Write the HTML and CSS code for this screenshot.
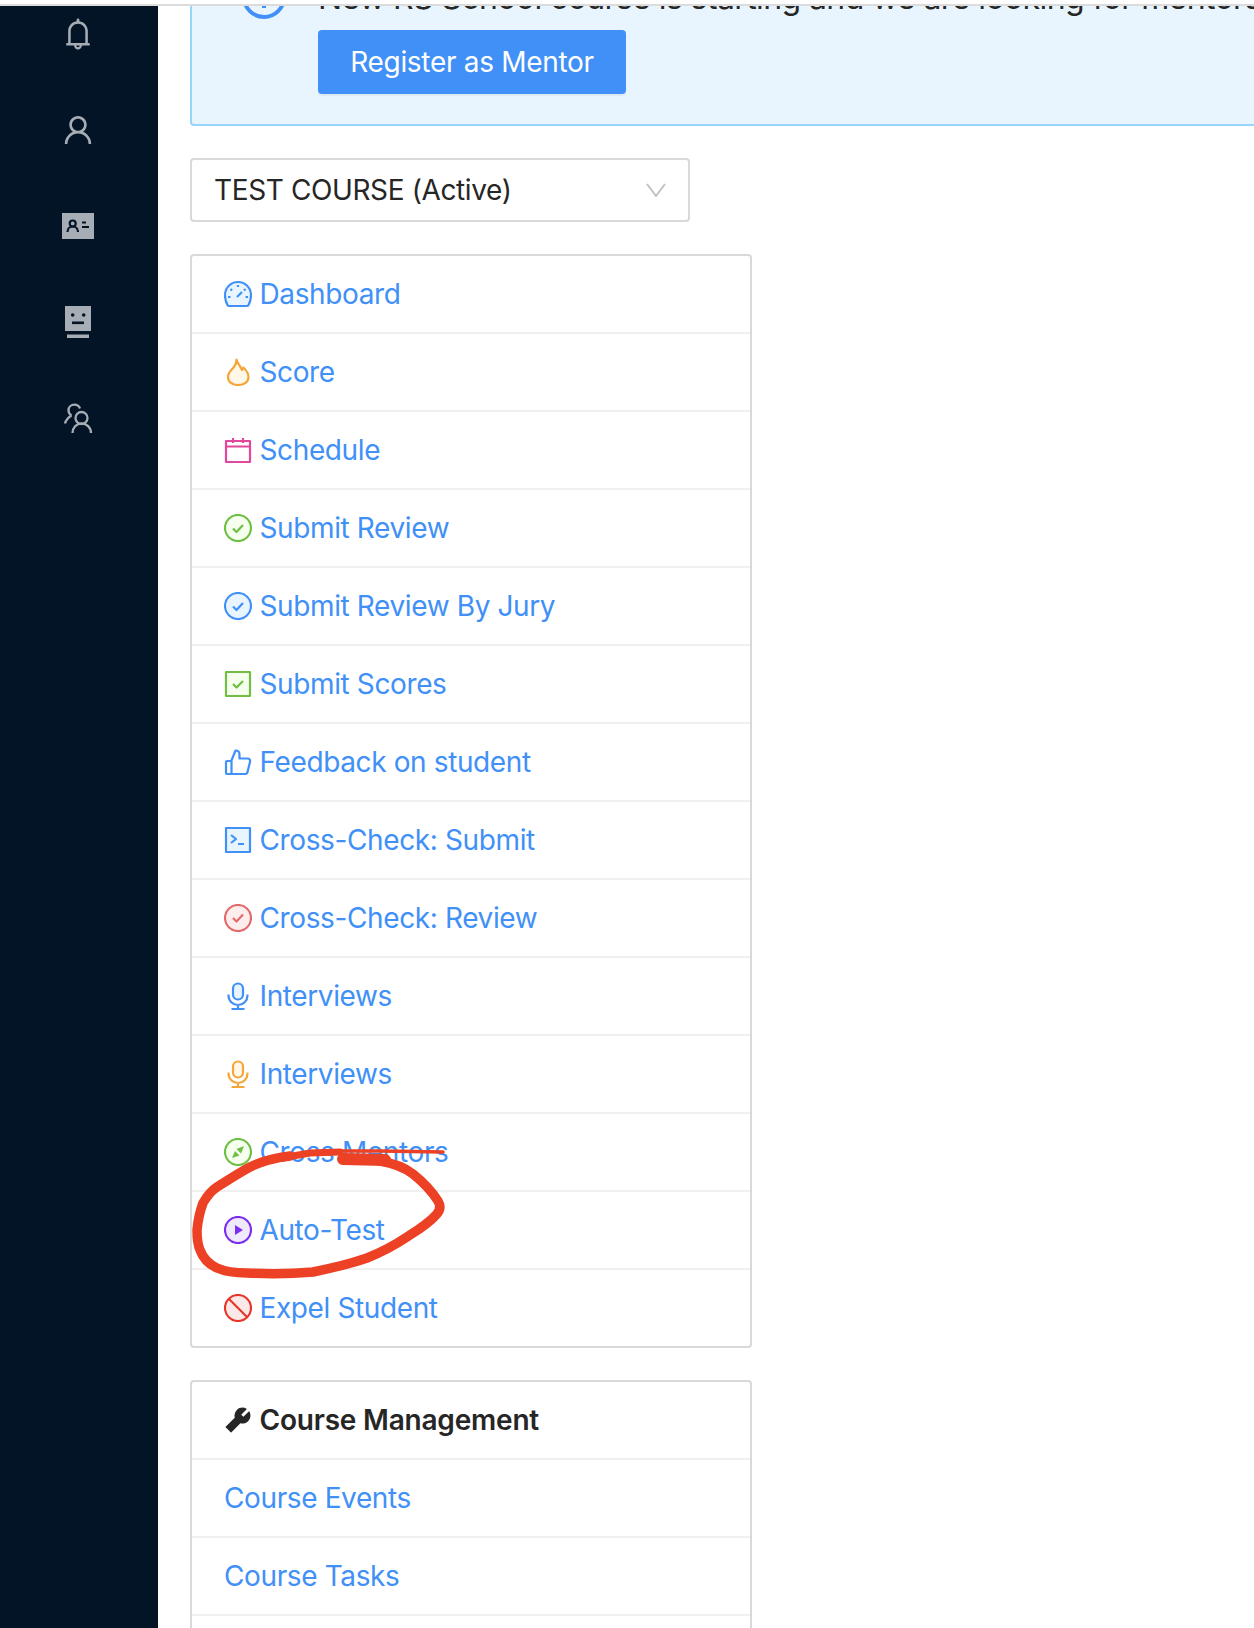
FILE: index.html
```html
<!DOCTYPE html>
<html lang="en">
<head>
<meta charset="utf-8">
<title>Course</title>
<link rel="stylesheet" href="styles.css">
</head>
<body>
<div class="topline"></div>
<div class="layout">
  <aside class="sider">
    <nav class="sider-nav">
      <a class="sider-item"><svg class="sider-icon" viewBox="0 0 1024 1024"><path fill="currentColor" d="M816 768h-24V428c0-141.1-104.3-257.7-240-277.1V112c0-22.1-17.9-40-40-40s-40 17.9-40 40v38.9c-135.7 19.4-240 136-240 277.1v340h-24c-17.7 0-32 14.3-32 32v32c0 4.4 3.6 8 8 8h216c0 61.8 50.2 112 112 112s112-50.2 112-112h216c4.4 0 8-3.6 8-8v-32c0-17.7-14.3-32-32-32zM512 888c-26.5 0-48-21.5-48-48h96c0 26.5-21.5 48-48 48zM304 768V428c0-55.6 21.6-107.8 60.9-147.1S456.4 220 512 220c55.6 0 107.8 21.6 147.1 60.9S720 372.4 720 428v340H304z"/></svg></a>
      <a class="sider-item"><svg class="sider-icon" viewBox="0 0 1024 1024"><path fill="currentColor" d="M858.5 763.6a374 374 0 0 0-80.6-119.5 375.63 375.63 0 0 0-119.5-80.6c-.4-.2-.8-.3-1.2-.5C719.5 518 760 444.7 760 362c0-137-111-248-248-248S264 225 264 362c0 82.7 40.5 156 102.8 201.1-.4.2-.8.3-1.2.5-44.8 18.9-85 46-119.5 80.6a375.63 375.63 0 0 0-80.6 119.5A371.7 371.7 0 0 0 136 901.8a8 8 0 0 0 8 8.2h60c4.4 0 7.9-3.5 8-7.8 2-77.2 33-149.5 87.8-204.3 56.7-56.7 132-87.9 212.2-87.9s155.5 31.2 212.2 87.9C779 752.7 810 825 812 902.2c.1 4.4 3.6 7.8 8 7.8h60a8 8 0 0 0 8-8.2c-1-47.8-10.9-94.3-29.5-138.2zM512 534c-45.9 0-89.1-17.9-121.6-50.4S340 407.9 340 362c0-45.9 17.9-89.1 50.4-121.6S466.1 190 512 190s89.1 17.9 121.6 50.4S684 316.1 684 362c0 45.9-17.9 89.1-50.4 121.6S557.9 534 512 534z"/></svg></a>
      <a class="sider-item"><svg class="sider-icon" viewBox="0 0 36 36"><rect x="2" y="5" width="32" height="26" fill="currentColor"/><circle cx="12.700" cy="15.500" r="3" fill="none" stroke="#021426" stroke-width="2.200"/><path d="M7.500 24c0-3.500 2.300-5.500 5.200-5.500s5.300 2 5.300 5.500" fill="none" stroke="#021426" stroke-width="2.200"/><path d="M22 14.500h4M22 19h7" stroke="#021426" stroke-width="2.200"/></svg></a>
      <a class="sider-item"><svg class="sider-icon" viewBox="0 0 36 36"><rect x="5" y="2" width="26" height="25" fill="currentColor"/><rect x="7" y="30.500" width="22" height="3.500" fill="currentColor"/><circle cx="12.700" cy="11" r="1.800" fill="#021426"/><circle cx="23.700" cy="11" r="1.800" fill="#021426"/><rect x="12" y="17.500" width="12" height="2.600" fill="#021426"/></svg></a>
      <a class="sider-item"><svg class="sider-icon" viewBox="0 0 36 36"><g fill="none" stroke="currentColor" stroke-width="2.300"><circle cx="21.500" cy="18" r="6"/><path d="M12.500 33c0-5.500 4-9.500 9-9.500s9.500 4 9.500 9.500"/><path d="M20 8.500c-1-2.500-3.200-3.800-5.500-3.800-3.500 0-6 2.500-6 5.600 0 2.200 1 4 3 5.200"/><path d="M11.500 15.500c-3.500 2-5.500 4.500-6.500 8"/></g></svg></a>
    </nav>
  </aside>
  <main class="content">
    <section class="alert">
      <svg class="alert-icon" viewBox="0 0 44 44"><circle cx="22" cy="22" r="20" fill="none" stroke="#4090f7" stroke-width="4"/><rect x="20" y="21" width="4" height="12" fill="#4090f7"/></svg>
      <div class="alert-body">
        <p class="alert-text">New RS School course is starting and we are looking for mentors!</p>
        <a class="btn-primary">Register as Mentor</a>
      </div>
    </section>

    <div class="select">
      <span>TEST COURSE (Active)</span>
      <svg class="select-arrow" viewBox="0 0 20 14"><path d="M1 1l9 12 9-12" fill="none" stroke="#bfbfbf" stroke-width="1.800"/></svg>
    </div>

    <ul class="menu">
      <li class="menu-row"><svg class="icon" viewBox="0 0 28 28"><path class="fill-blue" d="M3.500 25C1.900 22 1 19 1 15a13 13 0 0 1 26 0c0 4-.9 7-2.500 10q-.5 1-1.500 1H5q-1 0-1.500-1z"/><path class="line-blue" d="M14 5v2M6.500 9l1.500 1.500M21.500 9 20 10.500M4 17h2.500M21.500 17H24M13 17l5-5"/></svg><a>Dashboard</a></li>
      <li class="menu-row"><svg class="icon" viewBox="0 0 28 28"><path class="fill-orange" d="M12.500 1.500c1 4 3.500 6 5.500 10.500.7-.7 1.200-1.500 1.400-2.500 2.600 2.500 5.100 6 5.100 9.500 0 5-4.500 8-10.300 8S4 24 4 19c0-5 3.500-7 6-10 1.500-2 2.500-4.500 2.500-7.500z"/></svg><a>Score</a></li>
      <li class="menu-row"><svg class="icon" viewBox="0 0 28 28"><path class="line-pink" d="M2 5h24v21H2zM2 10.500h24M9 2v5M19 2v5"/></svg><a>Schedule</a></li>
      <li class="menu-row"><svg class="icon" viewBox="0 0 28 28"><circle class="fill-green" cx="14" cy="14" r="13"/><path class="line-green" d="M9 14.500l3.500 3.500L19 11"/></svg><a>Submit Review</a></li>
      <li class="menu-row"><svg class="icon" viewBox="0 0 28 28"><circle class="fill-blue" cx="14" cy="14" r="13"/><path class="line-blue" d="M9 14.500l3.500 3.500L19 11"/></svg><a>Submit Review By Jury</a></li>
      <li class="menu-row"><svg class="icon" viewBox="0 0 28 28"><rect class="fill-green" x="2" y="2" width="24" height="24"/><path class="line-green" d="M9 14l3.500 3.500L19 11"/></svg><a>Submit Scores</a></li>
      <li class="menu-row"><svg class="icon" viewBox="0 0 28 28"><path class="line-blue" d="M7.500 12.500l4-10c2.500 0 4 1.500 4 4v4h8c1.800 0 3 1.500 2.500 3.500l-2.500 10c-.3 1.200-1.200 2-2.500 2H7.500zM7.500 13H3q-1 0-1 1v11q0 1 1 1h4.500"/></svg><a>Feedback on student</a></li>
      <li class="menu-row"><svg class="icon" viewBox="0 0 28 28"><rect class="fill-blue" x="2" y="2" width="24" height="24"/><path class="line-blue" d="M7 9l5 4-5 4M14 18h6"/></svg><a>Cross-Check: Submit</a></li>
      <li class="menu-row"><svg class="icon" viewBox="0 0 28 28"><circle class="fill-red" cx="14" cy="14" r="13"/><path class="line-red" d="M9 14l3.500 3.500L19 10.500"/></svg><a>Cross-Check: Review</a></li>
      <li class="menu-row"><svg class="icon" viewBox="0 0 28 28"><rect class="fill-blue" x="9" y="1.500" width="10" height="16" rx="5"/><path class="line-blue" d="M4.500 12.500v1a9.500 9.500 0 0 0 19 0v-1M14 23v4M7.500 27h13"/></svg><a>Interviews</a></li>
      <li class="menu-row"><svg class="icon" viewBox="0 0 28 28"><rect class="fill-orange" x="9" y="1.500" width="10" height="16" rx="5"/><path class="line-orange" d="M4.500 12.500v1a9.500 9.500 0 0 0 19 0v-1M14 23v4M7.500 27h13"/></svg><a>Interviews</a></li>
      <li class="menu-row"><svg class="icon" viewBox="0 0 28 28"><circle class="fill-green" cx="14" cy="14" r="13"/><path class="solid-green" d="M20 8l-3 7.500-4.500-4.500zM8 20l3-7 4.500 4.500z"/></svg><a>Cross Mentors</a></li>
      <li class="menu-row"><svg class="icon" viewBox="0 0 28 28"><circle class="fill-purple" cx="14" cy="14" r="13"/><path class="solid-purple" d="M11 9l8 5-8 5z"/></svg><a>Auto-Test</a></li>
      <li class="menu-row"><svg class="icon" viewBox="0 0 28 28"><circle class="fill-stop" cx="14" cy="14" r="13"/><path class="line-stop" d="M5 5l18 18"/></svg><a>Expel Student</a></li>
    </ul>

    <ul class="menu menu-second">
      <li class="menu-row menu-title"><svg class="icon icon-tool" viewBox="0 0 1024 1024"><path fill="#262626" d="M876.6 239.5c-.5-.9-1.200-1.800-2-2.500-5-5-13.100-5-18.100 0L684.200 409.300l-67.900-67.900L788.700 169c.8-.8 1.400-1.600 2-2.500 3.600-6.100 1.600-13.900-4.500-17.500-98.200-58-226.800-44.700-311.300 39.700-67 67-89.200 162-66.500 247.400l-293 293c-3 3-2.800 7.900.3 11l169.700 169.700c3.100 3.100 8.100 3.300 11 .3l292.900-292.900c85.500 22.800 180.500.7 247.600-66.400 84.400-84.500 97.700-213.100 39.700-311.300z"/></svg><span>Course Management</span></li>
      <li class="menu-row"><a>Course Events</a></li>
      <li class="menu-row"><a>Course Tasks</a></li>
      <li class="menu-row"></li>
    </ul>
  </main>
</div>
<svg class="annotation" viewBox="0 0 1254 1628">
  <path class="ink-thin" d="M443 1152L380 1151L333 1151"/>
  <path class="ink-mid" d="M340 1152L310 1153L287 1157"/>
  <path class="ink-blob" d="M343 1159L385 1160"/>
  <path class="ink" d="M380 1161C392 1163 404 1167 413 1174C423 1182 433 1193 438 1201C441 1206 440 1211 436 1215C428 1224 418 1230 407 1237C395 1245 382 1252 367 1258C350 1264 332 1268 313 1272C290 1274 268 1274 247 1273C235 1273 226 1272 217 1268C208 1264 203 1258 200 1250C197 1243 197 1236 197 1230C198 1220 200 1211 203 1203C207 1196 211 1191 217 1187C228 1180 239 1173 250 1167C262 1161 274 1158 290 1156"/>
</svg>
</body>
</html>
```
FILE: styles.css
```css
* { box-sizing: border-box; }
html, body { margin: 0; padding: 0; height: 1628px; overflow: hidden; background: #fff; }
body { position: relative; font-family: Inter, "Liberation Sans", sans-serif; font-size: 28px; letter-spacing: -.38px; color: #262626; }
.topline { height: 6px; border-bottom: 2px solid #dcdcdc; }
.layout { display: flex; height: 1622px; overflow: hidden; }
.sider { width: 158px; flex: none; padding-right: 2px; background: #021426; color: #a6adb4; }
.sider-nav { display: flex; flex-direction: column; margin-top: -20px; }
.sider-item { height: 96px; display: flex; align-items: center; justify-content: center; }
.sider-icon { width: 36px; height: 36px; display: block; }
.content { flex: 1; min-width: 0; padding-left: 32px; overflow: hidden; }
.alert { display: flex; width: 1100px; margin-top: -50px; padding: 20px 0 30px 50px; gap: 32px; background: #e8f5fe; border: 2px solid #99d4fa; border-radius: 4px; }
.alert-icon { width: 44px; height: 44px; flex: none; margin-top: -3px; }
.alert-text { margin: 0 0 12px; font-size: 32px; letter-spacing: -.6px; line-height: 40px; white-space: nowrap; }
.btn-primary { display: inline-block; width: 308px; height: 64px; line-height: 64px; text-align: center; letter-spacing: -.3px; color: #fff; background: #4090f7; border-radius: 4px; box-shadow: 0 2px 0 rgba(0,0,0,.045); }
.select { display: flex; align-items: center; justify-content: space-between; width: 500px; height: 64px; margin-top: 32px; padding: 0 22px; border: 2px solid #d9d9d9; border-radius: 4px; background: #fff; }
.select-arrow { width: 20px; height: 14px; flex: none; }
.menu { width: 562px; margin: 32px 0 0; padding: 0; list-style: none; border: 2px solid #d9d9d9; border-radius: 4px; background: #fff; }
.menu-row { display: flex; align-items: center; height: 78px; padding-left: 32px; border-bottom: 2px solid #f0f0f0; color: #4090f7; }
.menu > .menu-row:last-child { height: 76px; border-bottom: 0; }
.menu-second > .menu-row:last-child { height: 78px; }
.menu-title { font-weight: 600; letter-spacing: -.2px; color: #262626; }
.icon { width: 28px; height: 28px; flex: none; margin-right: 7.5px; }
.icon-tool { width: 32px; height: 32px; margin: 0 5.5px 0 -2px; }
.fill-blue, .fill-green, .fill-red, .fill-orange, .fill-purple, .fill-stop, .line-blue, .line-green, .line-red, .line-orange, .line-pink, .line-stop { stroke-width: 2.200; stroke-linejoin: round; }
.line-blue, .line-green, .line-red, .line-orange, .line-pink, .line-stop { fill: none; }
.fill-blue { fill: #e8f5fe; stroke: #4090f7; }
.fill-green { fill: #f6ffed; stroke: #6fbf45; }
.fill-red { fill: #fdeeed; stroke: #e46a6a; }
.fill-orange { fill: #fff8e8; stroke: #f5a63a; }
.fill-purple { fill: #f0e8fb; stroke: #7a2ff0; }
.fill-stop { fill: #fae9e6; stroke: #e8352a; }
.line-blue { stroke: #4090f7; }
.line-green { stroke: #6fbf45; }
.line-red { stroke: #e46a6a; }
.line-orange { stroke: #f5a63a; }
.line-pink { stroke: #e2479c; }
.line-stop { stroke: #e8352a; }
.solid-green { fill: #6fbf45; }
.solid-purple { fill: #7a2ff0; }
.annotation { position: absolute; left: 0; top: 0; width: 1254px; height: 1628px; pointer-events: none; }
.ink, .ink-thin, .ink-mid, .ink-blob { fill: none; stroke: #ec4124; stroke-linecap: round; stroke-linejoin: round; }
.ink { stroke-width: 9.500; }
.ink-thin { stroke-width: 3.500; }
.ink-mid { stroke-width: 7; }
.ink-blob { stroke-width: 12; }
```
